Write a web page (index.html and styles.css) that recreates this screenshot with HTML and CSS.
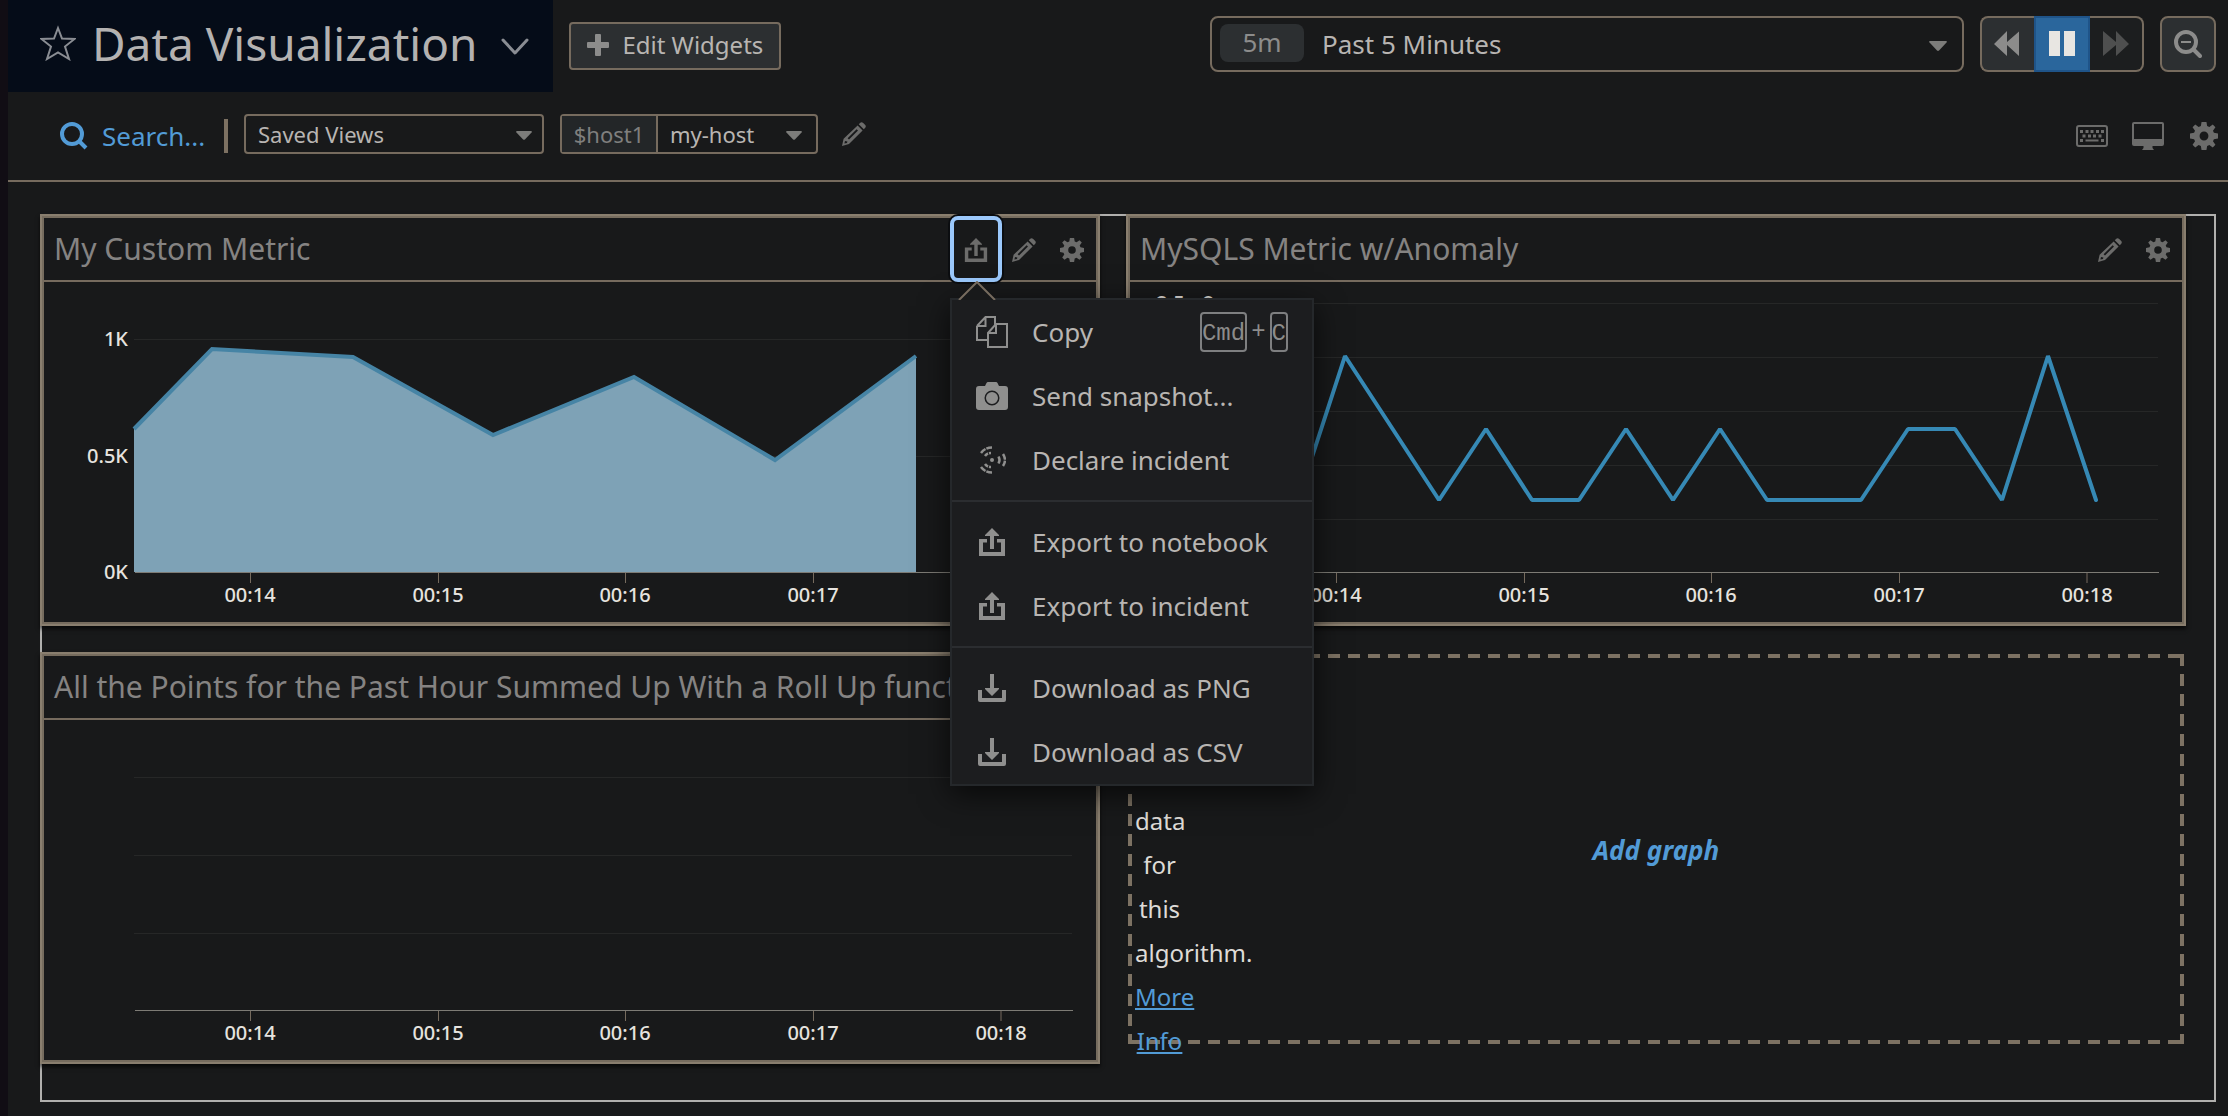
FILE: index.html
```html
<!DOCTYPE html>
<html lang="en">
<head>
<meta charset="utf-8">
<meta name="viewport" content="width=device-width, initial-scale=1">
<title>Data Visualization</title>
<link rel="stylesheet" href="styles.css">
</head>
<body>
<svg class="sprite" aria-hidden="true">
  <symbol id="i-pencil" viewBox="0 0 24 24"><path fill-rule="evenodd" d="M15.6 3.4 20.6 8.4 7 22 0 24 1.6 16.8ZM14.6 7.2 5.6 16.2 7 17.6 16 8.6ZM3 19 2.4 21.6 5 21 5.4 19.6Z"/><path d="M16.8 2.2 18 1Q19.6-.6 21.2 1L23 2.8Q24.6 4.4 23 6L21.8 7.2Z"/></symbol>
  <symbol id="i-gear" viewBox="0 0 24 24"><path fill-rule="evenodd" d="M9.9 0H14.1L14.7 3.5 16.6 4.3 19.5 2.2 21.8 4.5 19.7 7.4 20.5 9.3 24 9.9V14.1L20.5 14.7 19.7 16.6 21.8 19.5 19.5 21.8 16.6 19.7 14.7 20.5 14.1 24H9.9L9.3 20.5 7.4 19.7 4.5 21.8 2.2 19.5 4.3 16.6 3.5 14.7 0 14.1V9.9L3.5 9.3 4.3 7.4 2.2 4.5 4.5 2.2 7.4 4.3 9.3 3.5ZM12 8.2A3.8 3.8 0 1 0 12 15.8 3.8 3.8 0 1 0 12 8.2Z"/></symbol>
  <symbol id="i-share" viewBox="0 0 28 28"><path d="M14 0 21 7V8H16V21H12V8H7V7Z"/><path d="M9 11H1V28H27V11H19V14.500H23V24H5V14.500H9Z"/></symbol>
  <symbol id="i-download" viewBox="0 0 28 28"><path d="M12 0H16V14H21V15L14 22 7 15V14H12Z"/><path d="M0 16H4V24H24V16H28V26Q28 28 26 28H2Q0 28 0 26Z"/></symbol>
  <symbol id="i-caret" viewBox="0 0 18 10"><path d="M1 0H17Q18.500 0 17.500 1.500L10 9.500Q9 10.300 8 9.500L.5 1.500Q-.5 0 1 0Z"/></symbol>
</svg>

<div class="app">
  <header class="topbar">
    <div class="title-block">
      <button class="plain" aria-label="Favorite dashboard"><svg class="star" width="36" height="36" viewBox="0 0 36 36"><path d="M18 3 22 13.500 34.500 14 25 21.500 29 34 18 27.500 7 34 11 21.500 1.500 14 14 13.500Z"/></svg></button>
      <h1>Data Visualization</h1>
      <button class="plain chevron" aria-label="Dashboard options"><svg width="28" height="18" viewBox="0 0 28 18"><path d="M2 2 14 15 26 2"/></svg></button>
    </div>
    <button class="edit"><svg width="22" height="22" viewBox="0 0 22 22"><path d="M9 0H13Q14 0 14 1V8H21Q22 8 22 9V13Q22 14 21 14H14V21Q14 22 13 22H9Q8 22 8 21V14H1Q0 14 0 13V9Q0 8 1 8H8V1Q8 0 9 0Z"/></svg>Edit Widgets</button>
    <div class="time">
      <label class="badge" for="range">5m</label>
      <select id="range"><option>Past 5 Minutes</option></select>
      <svg class="caret" width="18" height="10"><use href="#i-caret"/></svg>
    </div>
    <div class="playback">
      <button aria-label="Back"><svg width="26" height="26" viewBox="0 0 26 26"><path d="M13 0V11L25 .5V25L13 14V25L0 13Z"/></svg></button>
      <button class="pause" aria-label="Pause"><svg width="26" height="26" viewBox="0 0 26 26"><path d="M0 0H11V25H0ZM15 0H26V25H15Z"/></svg></button>
      <button class="off" aria-label="Forward" disabled><svg width="26" height="26" viewBox="0 0 26 26"><path d="M0 0 13 11V0L26 13 13 25V14L0 25Z"/></svg></button>
    </div>
    <button class="zoom" aria-label="Zoom out"><svg width="28" height="28" viewBox="0 0 28 28"><circle cx="12" cy="12" r="10"/><path d="M19.500 19.500 26 26" stroke-linecap="round"/><path class="thin" d="M7 12H17"/></svg></button>
  </header>

  <div class="toolbar">
    <label class="search"><svg width="28" height="28" viewBox="0 0 28 28"><circle cx="12" cy="12" r="10"/><path d="M19.500 19.500 26 26"/></svg><input type="text" placeholder="Search..." aria-label="Search"></label>
    <span class="rule"></span>
    <div class="pick saved">
      <select aria-label="Saved Views"><option>Saved Views</option></select>
      <svg class="caret" width="16" height="9"><use href="#i-caret"/></svg>
    </div>
    <div class="pick host">
      <label for="host">$host1</label>
      <select id="host"><option>my-host</option></select>
      <svg class="caret" width="16" height="9"><use href="#i-caret"/></svg>
    </div>
    <button class="plain" aria-label="Edit variables"><svg width="24" height="24"><use href="#i-pencil"/></svg></button>
    <div class="tools">
      <button class="plain" aria-label="Keyboard shortcuts"><svg width="32" height="22" viewBox="0 0 32 22"><rect x="1" y="1" width="30" height="20" rx="2" fill="none" stroke="currentColor" stroke-width="2"/><path d="M4 5h3v3H4zM9.500 5h3v3h-3zM14.500 5h3v3h-3zM20 5h3v3h-3zM25 5h3v3h-3zM6.500 9.500h3v3h-3zM12 9.500h3v3h-3zM17 9.500h3v3h-3zM22.500 9.500h3v3h-3zM4 14h3v3H4zM9.500 14.500h13v2h-13zM25 14h3v3h-3z"/></svg></button>
      <button class="plain" aria-label="TV mode"><svg width="32" height="28" viewBox="0 0 32 28"><path fill-rule="evenodd" d="M2 0H30Q32 0 32 2V22Q32 24 30 24H20.500V26L22 28H10L11.500 26V24H2Q0 24 0 22V2Q0 0 2 0ZM2 2V17H30V2Z"/></svg></button>
      <button class="plain" aria-label="Settings"><svg width="28" height="28"><use href="#i-gear"/></svg></button>
    </div>
  </div>

  <main class="board">
    <section class="widget front">
      <header class="head">
        <h2>My Custom Metric</h2>
        <div class="share">
          <button class="act focused" aria-label="Share" aria-expanded="true"><svg width="24" height="24"><use href="#i-share"/></svg></button>
          <div class="menu" role="menu">
            <div class="group">
              <button class="item" role="menuitem"><span class="ico"><svg width="32" height="32" viewBox="0 0 32 32" class="line"><path d="M1 10 9.500 1H19V8.500M1 10V24H11.500M1 10H9.500V1M12 17 20 8H31V31H12ZM12 17H20V8"/></svg></span>Copy<span class="keys"><kbd>Cmd</kbd>+<kbd>C</kbd></span></button>
              <button class="item" role="menuitem"><span class="ico"><svg width="32" height="28" viewBox="0 0 32 28"><path fill-rule="evenodd" d="M3 4H9L10.500 1Q11 0 12 0H20Q21 0 21.500 1L23 4H29Q32 4 32 7V25Q32 28 29 28H3Q0 28 0 25V7Q0 4 3 4ZM16 8.500A7.500 7.500 0 1 0 16 23.500 7.500 7.500 0 1 0 16 8.500ZM16 10A6 6 0 1 1 16 22 6 6 0 1 1 16 10Z"/></svg></span>Send snapshot...</button>
              <button class="item" role="menuitem"><span class="ico"><svg width="28" height="28" viewBox="0 0 28 28" class="line"><circle cx="14" cy="14" r="2" fill="currentColor" stroke="none"/><g stroke-width="2.500"><path d="M3 7Q7 1.500 14 1.500M3 21Q7 26.500 14 26.500M25 8Q29 14 25 20" stroke-dasharray="6 1"/><path d="M7 10Q9 7 13 7M7 18Q9 21 13 21" stroke-dasharray="4 1"/><path d="M20.500 10.500Q22.500 14 20.500 17.500"/></g></svg></span>Declare incident</button>
            </div>
            <div class="group">
              <button class="item" role="menuitem"><span class="ico"><svg width="28" height="28"><use href="#i-share"/></svg></span>Export to notebook</button>
              <button class="item" role="menuitem"><span class="ico"><svg width="28" height="28"><use href="#i-share"/></svg></span>Export to incident</button>
            </div>
            <div class="group">
              <button class="item" role="menuitem"><span class="ico"><svg width="28" height="28"><use href="#i-download"/></svg></span>Download as PNG</button>
              <button class="item" role="menuitem"><span class="ico"><svg width="28" height="28"><use href="#i-download"/></svg></span>Download as CSV</button>
            </div>
          </div>
          <svg class="tip" width="38" height="19" viewBox="0 0 38 19"><path d="M1 19 19 1 37 19"/></svg>
        </div>
        <button class="act" aria-label="Edit"><svg width="24" height="24"><use href="#i-pencil"/></svg></button>
        <button class="act" aria-label="Settings"><svg width="24" height="24"><use href="#i-gear"/></svg></button>
      </header>
      <svg class="chart" viewBox="0 0 1052 340" role="img" aria-label="My Custom Metric chart">
        <path class="grid" d="M90 57.500H1028M90 174.500H1028"/>
        <path class="area" d="M90 147 168 67 309 75 449 153 590 95 731 178 872 74V290H90Z"/>
        <path class="edge" d="M90 147 168 67 309 75 449 153 590 95 731 178 872 74"/>
        <path class="axis" d="M91 290.500H1029"/>
        <path class="tick" d="M206.500 291V301M394.500 291V301M581.500 291V301M769.500 291V301"/>
        <g class="ylab"><text x="84" y="64">1K</text><text x="84" y="181">0.5K</text><text x="84" y="297">0K</text></g>
        <g class="xlab"><text x="206" y="320">00:14</text><text x="394" y="320">00:15</text><text x="581" y="320">00:16</text><text x="769" y="320">00:17</text></g>
      </svg>
    </section>

    <section class="widget">
      <header class="head">
        <h2>MySQLS Metric w/Anomaly</h2>
        <button class="act" aria-label="Edit"><svg width="24" height="24"><use href="#i-pencil"/></svg></button>
        <button class="act" aria-label="Settings"><svg width="24" height="24"><use href="#i-gear"/></svg></button>
      </header>
      <svg class="chart" viewBox="0 0 1052 340" role="img" aria-label="MySQLS Metric chart">
        <path class="grid" d="M90 21.500H1028M90 75.500H1028M90 129.500H1028M90 183.500H1028M90 237.500H1028"/>
        <path class="series" d="M168 218 215 74 309 218 356 147 402 218 449 218 496 147 543 218 590 147 637 218 731 218 778 147 825 147 872 218 918 74 966 218"/>
        <path class="axis" d="M91 290.500H1029"/>
        <path class="tick" d="M206.500 291V301M394.500 291V301M581.500 291V301M769.500 291V301M957 291V301"/>
        <g class="ylab"><text x="84" y="28">2.5e-8</text></g>
        <g class="xlab"><text x="206" y="320">00:14</text><text x="394" y="320">00:15</text><text x="581" y="320">00:16</text><text x="769" y="320">00:17</text><text x="957" y="320">00:18</text></g>
      </svg>
    </section>

    <section class="widget">
      <header class="head">
        <h2>All the Points for the Past Hour Summed Up With a Roll Up function</h2>
      </header>
      <svg class="chart" viewBox="0 0 1052 340" role="img" aria-label="Roll up chart">
        <path class="grid" d="M90 57.500H1028M90 135.500H1028M90 213.500H1028"/>
        <path class="axis" d="M91 290.500H1029"/>
        <path class="tick" d="M206.500 291V301M394.500 291V301M581.500 291V301M769.500 291V301M957 291V301"/>
        <g class="xlab"><text x="206" y="320">00:14</text><text x="394" y="320">00:15</text><text x="581" y="320">00:16</text><text x="769" y="320">00:17</text><text x="957" y="320">00:18</text></g>
      </svg>
    </section>

    <section class="empty">
      <button class="add">Add graph</button>
      <p class="note">data for this algorithm. <a href="#">More Info</a></p>
    </section>
  </main>
</div>
</body>
</html>
```
FILE: styles.css
```css
:root {
  --bg: #18191a;
  --line: #766b5e;
  --text: #b8b5b2;
  --dim: #8c8c8b;
  --fill: #2c2f31;
  --blue: #529bd6;
}

* { box-sizing: border-box; }

body {
  margin: 0;
  background: var(--bg);
  color: var(--text);
  font: 24px/32px "Noto Sans", "Liberation Sans", sans-serif;
}

button, select, input { font: inherit; color: inherit; margin: 0; }
svg { display: block; fill: currentColor; flex: none; }
h1, h2, p { margin: 0; font-weight: 400; }

.sprite { position: absolute; width: 0; height: 0; }

.app { min-height: 100vh; border-left: 8px solid #110d14; }

.plain { display: flex; padding: 0; border: 0; background: none; }

/* top bar */
.topbar { display: flex; align-items: flex-start; height: 92px; padding-right: 12px; gap: 16px; }

.title-block {
  display: flex;
  align-items: center;
  height: 92px;
  padding: 0 24px 6px 32px;
  gap: 16px;
  background: #050c18;
  color: #8a8d93;
}
.title-block h1 { font-size: 46px; line-height: 64px; color: #b4b2b1; white-space: nowrap; }
.star { fill: none; stroke: currentColor; stroke-width: 2; }
.chevron { margin: 8px 0 0 8px; }
.chevron svg { fill: none; stroke: currentColor; stroke-width: 3; stroke-linecap: round; stroke-linejoin: round; }

.edit {
  display: flex;
  align-items: center;
  height: 48px;
  margin-top: 22px;
  padding: 0 16px 2px;
  gap: 13px;
  border: 2px solid var(--line);
  border-radius: 4px;
  background: var(--fill);
  white-space: nowrap;
}
.edit svg { color: var(--dim); }

.time {
  position: relative;
  display: flex;
  align-items: center;
  flex: 0 1 754px;
  height: 56px;
  margin: 16px 0 0 auto;
  padding-left: 8px;
  border: 2px solid var(--line);
  border-radius: 8px;
  font-size: 26px;
}
.badge {
  width: 84px;
  height: 38px;
  margin-bottom: 2px;
  border-radius: 8px;
  background: var(--fill);
  color: var(--dim);
  line-height: 36px;
  text-align: center;
}

select {
  flex: 1;
  min-width: 0;
  height: 100%;
  padding: 0 0 0 12px;
  border: 0;
  outline: 0;
  background: none;
  appearance: none;
}
.time select { padding-left: 18px; }
.caret { position: absolute; right: 10px; top: 50%; margin-top: -3px; color: #7c7c7a; pointer-events: none; }
.time .caret { right: 15px; }

.playback { display: flex; margin-top: 16px; }
.playback button, .zoom {
  display: flex;
  align-items: center;
  justify-content: center;
  width: 56px;
  height: 56px;
  padding: 0;
  border: 2px solid var(--line);
  background: var(--fill);
  color: var(--dim);
}
.playback button:first-child { width: 54px; padding-right: 2px; border-right: 0; border-radius: 8px 0 0 8px; }
.playback .pause { border-color: #1f5489; background: #2a669c; color: #e8e6e2; }
.playback .off { width: 54px; border-left: 0; border-radius: 0 8px 8px 0; background: #1c1e1f; color: #4e4f4f; }
.zoom { margin-top: 16px; border-radius: 8px; }
.zoom svg, .search svg { fill: none; stroke: currentColor; stroke-width: 4; }
.zoom .thin { stroke-width: 2; }

/* second bar */
.toolbar {
  display: flex;
  align-items: center;
  height: 90px;
  padding: 0 10px 4px 52px;
  border-bottom: 2px solid var(--line);
  color: #6c6c6b;
}
.search { display: flex; align-items: center; width: 164px; padding-top: 4px; gap: 14px; color: var(--blue); font-size: 26px; }
.search input { width: 112px; padding: 0; border: 0; outline: 0; background: none; }
.search input::placeholder { color: inherit; opacity: 1; }
.rule { width: 4px; height: 34px; margin: 4px 16px 0 0; background: #7d7162; }

.pick {
  position: relative;
  display: flex;
  height: 40px;
  margin-right: 16px;
  border: 2px solid var(--line);
  border-radius: 4px;
  color: var(--text);
  font-size: 22px;
}
.saved { width: 300px; }
.host { width: 258px; margin-right: 24px; }
.host label {
  width: 96px;
  border-right: 2px solid var(--line);
  background: #232628;
  color: #7f7f7e;
  line-height: 36px;
  text-align: center;
}
.host .caret { right: 14px; }
.tools { display: flex; align-items: center; gap: 24px; margin-left: auto; padding-top: 4px; }
.tools > :last-child { margin-left: 2px; }

/* widget board */
.board {
  display: grid;
  grid-template-columns: 1fr 1fr;
  gap: 26px;
  margin: 32px 12px 14px 32px;
  padding: 0 30px 38px 0;
  box-shadow: inset 0 0 0 2px #b1b0ae;
}

.widget {
  min-width: 0;
  padding: 2px;
  border: 2px solid #897e6e;
  background: var(--bg);
  box-shadow: inset 0 0 0 2px #766c5e, 0 3px 4px #000a;
}
.front { position: relative; z-index: 1; }

.head { display: flex; height: 64px; border-bottom: 2px solid var(--line); color: #6c6c6b; }
.head h2 {
  flex: 1;
  min-width: 0;
  padding-left: 10px;
  overflow: hidden;
  color: #858382;
  font-size: 30px;
  line-height: 62px;
  white-space: nowrap;
  text-overflow: ellipsis;
}
.act { display: flex; align-items: center; justify-content: center; width: 48px; height: 62px; padding: 2px 0 0; border: 0; background: none; color: inherit; }
.share { position: relative; }
.focused { outline: 4px solid #9bc8fb; outline-offset: -2px; border-radius: 6px; box-shadow: 0 0 0 4px #0b0d10; }

.tip { position: absolute; left: 6px; top: 63px; fill: var(--bg); stroke: var(--line); stroke-width: 2; }

.menu {
  position: absolute;
  left: -2px;
  top: 80px;
  width: 364px;
  border: 2px solid #25282b;
  background: #1c1d1f;
  box-shadow: 0 8px 28px #000a;
}
.group { padding: 8px 0; border-top: 2px solid #2b2d30; }
.group:first-child { padding-top: 0; border-top: 0; }
.group:last-child { padding-bottom: 0; }
.item {
  display: flex;
  align-items: center;
  width: 100%;
  height: 64px;
  padding: 0 24px;
  border: 0;
  background: none;
  color: var(--text);
  font-size: 26px;
  white-space: nowrap;
}
.ico { display: flex; justify-content: center; width: 32px; margin-right: 24px; color: #8f8f8e; }
.line { fill: none; stroke: currentColor; stroke-width: 2; }
.keys { display: flex; align-items: center; gap: 4px; margin-left: auto; color: var(--dim); font: 24px/32px "Liberation Mono", monospace; }
.keys kbd { padding-top: 4px; border: 2px solid #7e7f80; border-radius: 4px; font: inherit; }

/* charts */
.chart { width: 100%; height: auto; }
.grid, .axis, .tick { fill: none; stroke: #262727; }
.axis { stroke: #7d7b75; }
.tick { stroke: #766b5e; }
.area { fill: #7ea2b6; }
.edge { fill: none; stroke: #4684a5; stroke-width: 4; }
.series { fill: none; stroke: #3689b5; stroke-width: 4; stroke-linecap: round; stroke-linejoin: bevel; }
.ylab, .xlab { fill: #e6e3df; font-size: 20px; font-weight: 500; }
.ylab { text-anchor: end; }
.xlab { text-anchor: middle; }

/* empty slot */
.empty {
  --dash: #7d7263 0 12px, transparent 12px 20px;
  position: relative;
  display: grid;
  place-items: center;
  margin: 2px 2px 20px;
  background:
    repeating-linear-gradient(90deg, var(--dash)) 0 0 / 100% 4px no-repeat,
    repeating-linear-gradient(90deg, var(--dash)) 0 100% / 100% 4px no-repeat,
    repeating-linear-gradient(180deg, var(--dash)) 0 0 / 4px 100% no-repeat,
    repeating-linear-gradient(180deg, var(--dash)) 100% 0 / 4px 100% no-repeat;
}
.add { padding: 2px 0 0; border: 0; background: none; color: var(--blue); font-size: 26px; font-style: italic; font-weight: 700; }
.note { position: absolute; left: 7px; top: 145px; width: 49px; color: #dedbd7; line-height: 44px; text-align: center; }
.note a { color: var(--blue); }
```
